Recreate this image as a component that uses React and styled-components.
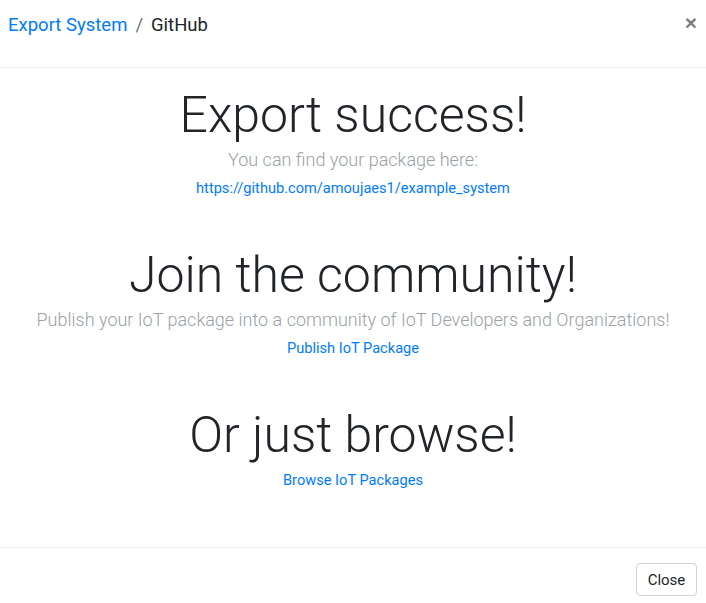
import React from "react";
import styled, { createGlobalStyle } from "styled-components";

const Global = createGlobalStyle`
  html, body { margin: 0; padding: 0; background: #fff; }
  body { font-family: "Helvetica Neue", Roboto, "Liberation Sans", Arial, sans-serif; color: #212529; }
  * { box-sizing: border-box; }
`;

const Modal = styled.div`
  width: 706px;
  height: 603px;
  display: flex;
  flex-direction: column;
  background: #fff;
`;

const Header = styled.div`
  height: 68px;
  display: flex;
  align-items: flex-start;
  justify-content: space-between;
  padding: 14px 9px 0 8px;
  border-bottom: 1px solid #e9ecef;
`;

const Title = styled.div`
  font-family: Roboto, "Liberation Sans", Arial, sans-serif;
  font-size: 18.5px;
  line-height: 22px;
  font-weight: 400;
  display: flex;
  gap: 8px;
`;

const Crumb = styled.span`
  color: ${(p) => (p.$active ? "#007bff" : "#212529")};
`;

const Sep = styled.span`
  color: #6c757d;
`;

const CloseX = styled.button`
  border: none;
  background: none;
  padding: 0;
  margin-top: -2px;
  font-family: "Liberation Sans", Arial, sans-serif;
  font-size: 21px;
  font-weight: 700;
  line-height: 22px;
  color: #7d7d7d;
  cursor: pointer;
`;

const Body = styled.div`
  flex: 1;
  display: flex;
  flex-direction: column;
  align-items: center;
  padding-top: 15px;
  text-align: center;
`;

const Section = styled.div`
  display: flex;
  flex-direction: column;
  align-items: center;
  margin-bottom: ${(p) => p.$gap || 44}px;
`;

const Display = styled.h1`
  margin: 0;
  font-family: Roboto, "Liberation Sans", Arial, sans-serif;
  font-size: 50px;
  font-weight: 300;
  line-height: 64px;
  color: #212529;
`;

const Lead = styled.p`
  margin: 0;
  font-family: Roboto, "Liberation Sans", Arial, sans-serif;
  font-size: 18px;
  font-weight: 300;
  line-height: 26px;
  color: #9aa1a8;
`;

const Link = styled.a`
  margin-top: ${(p) => p.$top || 4}px;
  font-family: Roboto, "Liberation Sans", Arial, sans-serif;
  font-size: 14.6px;
  line-height: 22px;
  color: #007bff;
  text-decoration: none;
`;

const Footer = styled.div`
  border-top: 1px solid #e9ecef;
  height: 56px;
  display: flex;
  justify-content: flex-end;
  align-items: flex-start;
  padding: 15px 9px 0 0;
`;

const Button = styled.button`
  height: 33px;
  width: 61px;
  border: 1px solid #ced4da;
  border-radius: 4px;
  background: #fff;
  font-family: Roboto, "Liberation Sans", Arial, sans-serif;
  font-size: 15px;
  color: #212529;
  padding: 0;
`;

export default function App() {
  return (
    <>
      <Global />
      <Modal>
        <Header>
          <Title>
            <Crumb $active>Export System</Crumb>
            <Sep>/</Sep>
            <Crumb>GitHub</Crumb>
          </Title>
          <CloseX aria-label="Close">×</CloseX>
        </Header>
        <Body>
          <Section>
            <Display>Export success!</Display>
            <Lead>You can find your package here:</Lead>
            <Link href="#">https://github.com/amoujaes1/example_system</Link>
          </Section>
          <Section>
            <Display>Join the community!</Display>
            <Lead>Publish your IoT package into a community of IoT Developers and Organizations!</Lead>
            <Link href="#">Publish IoT Package</Link>
          </Section>
          <Section>
            <Display>Or just browse!</Display>
            <Link href="#" $top={2}>Browse IoT Packages</Link>
          </Section>
        </Body>
        <Footer>
          <Button>Close</Button>
        </Footer>
      </Modal>
    </>
  );
}
